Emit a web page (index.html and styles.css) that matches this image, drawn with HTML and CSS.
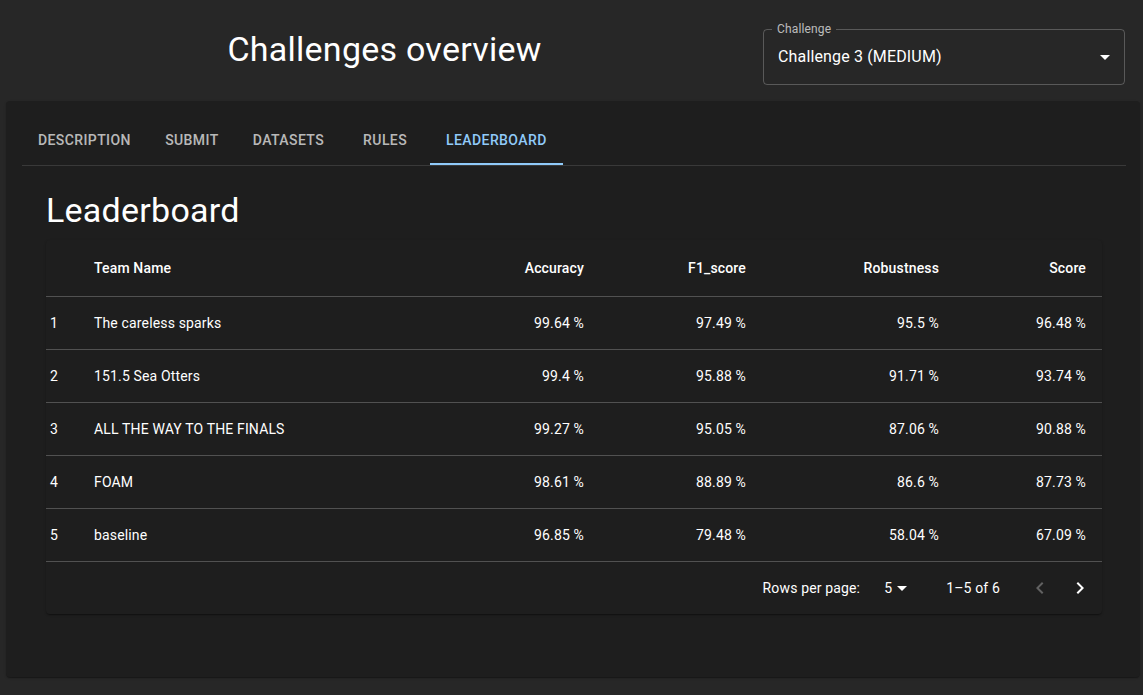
FILE: index.html
```html
<!DOCTYPE html>
<html lang="en">
<head>
<meta charset="utf-8">
<title>Challenges overview</title>
<link rel="stylesheet" href="styles.css">
</head>
<body>
<header class="header">
  <div class="title-box"><h1 class="title">Challenges overview</h1></div>
  <fieldset class="select-field">
    <legend class="select-label">Challenge</legend>
    <div class="select-row">
      <span class="select-value">Challenge 3 (MEDIUM)</span>
      <svg class="drop-icon" viewBox="0 0 24 24" width="24" height="24"><path d="M7 10l5 5 5-5z"/></svg>
    </div>
  </fieldset>
</header>
<main class="card">
  <nav class="tabs">
    <div class="tab">Description</div>
    <div class="tab">Submit</div>
    <div class="tab">Datasets</div>
    <div class="tab">Rules</div>
    <div class="tab active">Leaderboard</div>
  </nav>
  <section class="panel">
    <h2 class="panel-title">Leaderboard</h2>
    <div class="table-paper">
      <table class="board">
        <colgroup>
          <col class="c-rank"><col class="c-team"><col class="c-acc"><col class="c-f1"><col class="c-rob"><col class="c-score">
        </colgroup>
        <thead>
          <tr><th class="rank"></th><th class="left">Team Name</th><th>Accuracy</th><th>F1_score</th><th>Robustness</th><th>Score</th></tr>
        </thead>
        <tbody>
          <tr><td class="rank">1</td><td class="left">The careless sparks</td><td>99.64 %</td><td>97.49 %</td><td>95.5 %</td><td>96.48 %</td></tr>
          <tr><td class="rank">2</td><td class="left">151.5 Sea Otters</td><td>99.4 %</td><td>95.88 %</td><td>91.71 %</td><td>93.74 %</td></tr>
          <tr><td class="rank">3</td><td class="left">ALL THE WAY TO THE FINALS</td><td>99.27 %</td><td>95.05 %</td><td>87.06 %</td><td>90.88 %</td></tr>
          <tr><td class="rank">4</td><td class="left">FOAM</td><td>98.61 %</td><td>88.89 %</td><td>86.6 %</td><td>87.73 %</td></tr>
          <tr><td class="rank">5</td><td class="left">baseline</td><td>96.85 %</td><td>79.48 %</td><td>58.04 %</td><td>67.09 %</td></tr>
        </tbody>
      </table>
      <div class="pagination">
        <span class="rows-label">Rows per page:</span>
        <span class="rows-select">5<svg class="small-drop" viewBox="0 0 24 24" width="24" height="24"><path d="M7 10l5 5 5-5z"/></svg></span>
        <span class="rows-count">1–5 of 6</span>
        <span class="page-btn disabled"><svg viewBox="0 0 24 24" width="24" height="24"><path d="M15.41 16.59 10.83 12l4.58-4.59L14 6l-6 6 6 6 1.41-1.41z"/></svg></span>
        <span class="page-btn"><svg viewBox="0 0 24 24" width="24" height="24"><path d="M8.59 16.59 13.17 12 8.59 7.41 10 6l6 6-6 6-1.41-1.41z"/></svg></span>
      </div>
    </div>
  </section>
</main>
</body>
</html>
```
FILE: styles.css
```css
* { box-sizing: border-box; }
html, body {
  margin: 0;
  background: #272727;
  color: #fff;
  font-family: Roboto, "Liberation Sans", Arial, sans-serif;
}
body {
  padding: 0 3px 17px 6px;
}
.header {
  display: flex;
  align-items: flex-start;
  height: 101px;
  padding-top: 23px;
}
.title-box {
  width: 757px;
  display: flex;
  justify-content: center;
  padding-top: 5px;
}
.title {
  margin: 0;
  font-size: 34px;
  font-weight: 400;
  line-height: 42px;
  letter-spacing: 0.25px;
}
.select-field {
  margin: 0;
  width: 362px;
  border: 1px solid rgba(255,255,255,0.23);
  border-radius: 4px;
  padding: 0 7px 16px 8px;
  min-width: 0;
}
.select-label {
  font-size: 12px;
  line-height: 12px;
  padding: 0 5px;
  color: rgba(255,255,255,0.7);
  letter-spacing: 0.15px;
}
.select-row {
  display: flex;
  align-items: center;
  justify-content: space-between;
  padding: 10px 0 0 6px;
  height: 33px;
}
.select-value {
  font-size: 16px;
  line-height: 23px;
  letter-spacing: 0.15px;
}
.drop-icon { fill: #fff; }
.card {
  background: #1e1e1e;
  border-radius: 4px;
  padding: 16px 14px 16px 16px;
  box-shadow: 0 2px 1px -1px rgba(0,0,0,0.2), 0 1px 1px 0 rgba(0,0,0,0.14), 0 1px 3px 0 rgba(0,0,0,0.12);
}
.tabs {
  display: flex;
  border-bottom: 1px solid rgba(255,255,255,0.12);
}
.tab {
  min-width: 90px;
  height: 48px;
  padding: 0 16px;
  display: flex;
  align-items: center;
  justify-content: center;
  font-size: 14px;
  font-weight: 500;
  text-transform: uppercase;
  letter-spacing: 0.4px;
  color: rgba(255,255,255,0.7);
  border-bottom: 2px solid transparent;
}
.tab.active {
  color: #90caf9;
  border-bottom-color: #90caf9;
}
.panel {
  padding: 23px 24px 47px;
}
.panel-title {
  margin: 0 0 9px;
  font-size: 34px;
  font-weight: 400;
  line-height: 42px;
  letter-spacing: 0.25px;
}
.table-paper {
  background: #1e1e1e;
  border-radius: 4px;
  box-shadow: 0 2px 1px -1px rgba(0,0,0,0.2), 0 1px 1px 0 rgba(0,0,0,0.14), 0 1px 3px 0 rgba(0,0,0,0.12);
}
.board {
  width: 100%;
  border-collapse: collapse;
  table-layout: fixed;
  font-size: 14px;
}
.c-rank { width: 32px; }
.c-acc { width: 170px; }
.c-f1 { width: 162px; }
.c-rob { width: 193px; }
.c-score { width: 147px; }
.board th, .board td {
  padding: 16px;
  text-align: right;
  border-bottom: 1px solid #515151;
  letter-spacing: 0.15px;
  white-space: nowrap;
}
.board th {
  font-weight: 500;
  line-height: 24px;
}
.board td {
  font-weight: 400;
  line-height: 20px;
}
.board .left { text-align: left; }
.board .rank { text-align: left; padding-left: 4px; padding-right: 0; }
.pagination {
  height: 52px;
  display: flex;
  align-items: center;
  justify-content: flex-end;
  padding-right: 2px;
  font-size: 14px;
  letter-spacing: 0.15px;
}
.rows-label { margin-right: 16px; }
.rows-select {
  display: flex;
  align-items: center;
  padding-left: 8px;
  margin-right: 32px;
}
.small-drop {
  fill: #fff;
  margin-left: -2px;
}
.rows-count { margin-right: 20px; }
.page-btn {
  width: 40px;
  height: 40px;
  display: flex;
  align-items: center;
  justify-content: center;
  fill: #fff;
}
.page-btn.disabled { fill: rgba(255,255,255,0.3); }
```
